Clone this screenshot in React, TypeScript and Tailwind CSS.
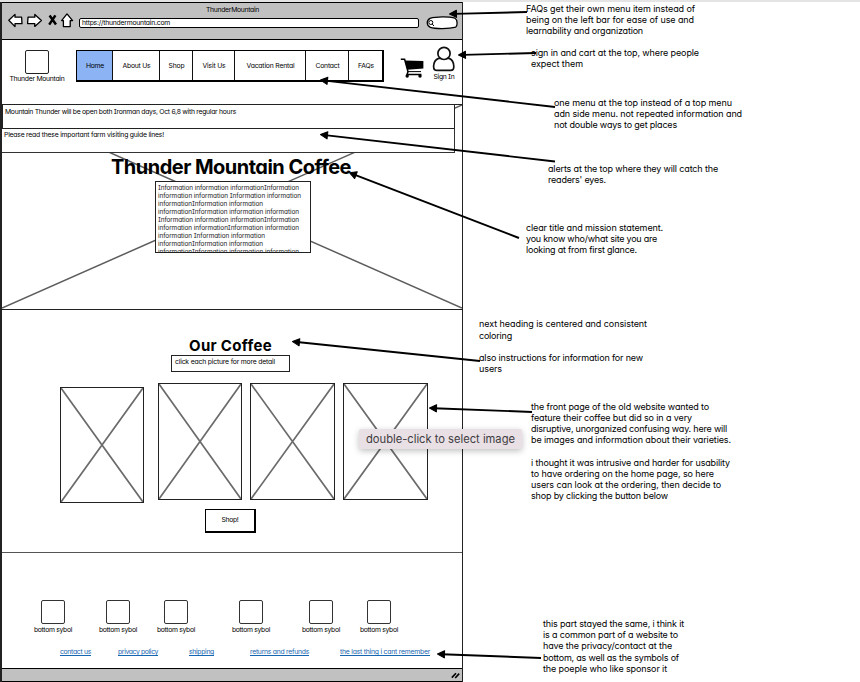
import { useLayoutEffect, useRef, useState } from "react";

/** A single line of text, tracked so that it fills the given width. */
function Fit({
  w,
  children,
  className = "",
  textClass = "",
}: {
  w: number;
  children: string;
  className?: string;
  textClass?: string;
}) {
  const ref = useRef<HTMLSpanElement>(null);
  const [spacing, setSpacing] = useState(0);
  useLayoutEffect(() => {
    const el = ref.current;
    if (!el) return;
    el.style.letterSpacing = "0px";
    const natural = el.getBoundingClientRect().width;
    const next = (w - natural) / children.length;
    el.style.letterSpacing = `${next}px`;
    setSpacing(next);
  }, [w, children]);
  return (
    <div className={`whitespace-nowrap ${className}`}>
      <span ref={ref} className={`inline-block ${textClass}`} style={{ letterSpacing: `${spacing}px` }}>
        {children}
      </span>
    </div>
  );
}

type Line = [string, number];

const menu: { label: string; text: number; cell: string }[] = [
  { label: "Home", text: 18, cell: "w-[36px] bg-[#8cb4f5] border-r" },
  { label: "About Us", text: 28, cell: "w-[47px] border-r" },
  { label: "Shop", text: 16, cell: "w-[33px] border-r" },
  { label: "Visit Us", text: 23, cell: "w-[42px] border-r" },
  { label: "Vacation Rental", text: 48, cell: "w-[71px] border-r" },
  { label: "Contact", text: 24, cell: "w-[43px] border-r" },
  { label: "FAQs", text: 16, cell: "w-[33px]" },
];

const mission: Line[] = [
  ["Information information informationInformation", 141],
  ["information information Information information", 143],
  ["informationInformation information", 105],
  ["informationInformation information information", 141],
  ["Information information informationInformation", 141],
  ["information informationInformation information", 141],
  ["information Information information", 107],
  ["informationInformation information", 105],
  ["informationInformation information information", 141],
];

const notes: { box: string; lines: Line[] }[] = [
  {
    box: "mt-[1px] ml-[63px]",
    lines: [
      ["FAQs get their own menu item instead of", 169],
      ["being on the left bar for ease of use and", 168],
      ["learnability and organization", 117],
    ],
  },
  {
    box: "mt-[10px] ml-[68px]",
    lines: [
      ["sign in and cart at the top, where people", 168],
      ["expect them", 52],
    ],
  },
  {
    box: "mt-[28px] ml-[91px]",
    lines: [
      ["one menu at the top instead of a top menu", 178],
      ["adn side menu. not repeated information and", 188],
      ["not double ways to get places", 123],
    ],
  },
  {
    box: "mt-[32px] ml-[85px]",
    lines: [
      ["alerts at the top where they will catch the", 170],
      ["readers' eyes.", 58],
    ],
  },
  {
    box: "mt-[37px] ml-[63px]",
    lines: [
      ["clear title and mission statement.", 137],
      ["you know who/what site you are", 131],
      ["looking at from first glance.", 111],
    ],
  },
  {
    box: "mt-[63px] ml-[16px]",
    lines: [
      ["next heading is centered and consistent", 168],
      ["coloring", 33],
      ["", 0],
      ["also instructions for information for new", 164],
      ["users", 23],
    ],
  },
  {
    box: "mt-[26.5px] ml-[68px]",
    lines: [
      ["the front page of the old website wanted to", 178],
      ["feature their coffee but did so in a very", 161],
      ["disruptive, unorganized confusing way. here will", 196],
      ["be images and information about their varieties.", 200],
      ["", 0],
      ["i thought it was intrusive and harder for usability", 199],
      ["to have ordering on the home page, so here", 183],
      ["users can look at the ordering, then decide to", 190],
      ["shop by clicking the button below", 137],
    ],
  },
  {
    box: "mt-[116.5px] ml-[80px]",
    lines: [
      ["this part stayed the same, i think it", 141],
      ["is a common part of a website to", 135],
      ["have the privacy/contact at the", 129],
      ["bottom, as well as the symbols of", 136],
      ["the poeple who like sponsor it", 124],
    ],
  },
];

const arrows = [
  [449, 14, 527, 12],
  [458, 55, 536, 53],
  [320, 80, 555, 107],
  [320, 134.5, 555, 161.5],
  [349, 172.5, 519, 238],
  [292, 341.5, 480, 361],
  [429, 408, 532, 412],
  [437, 654, 541, 658],
];

function Arrows() {
  return (
    <svg className="pointer-events-none absolute inset-0" width="860" height="682">
      {arrows.map(([x, y, tx, ty]) => {
        const angle = (Math.atan2(ty - y, tx - x) * 180) / Math.PI;
        const length = Math.hypot(tx - x, ty - y);
        return (
          <g key={`${x}-${y}`} transform={`translate(${x} ${y}) rotate(${angle})`}>
            <path d={`M5 0H${length}`} stroke="#000" strokeWidth="1.9" />
            <path d="M0.5 0L7.5 -3.6V3.6Z" stroke="#000" strokeLinejoin="round" />
          </g>
        );
      })}
    </svg>
  );
}

function Picture({ className }: { className: string }) {
  return (
    <div className={`shrink-0 border-[1.5px] border-[#222] ${className}`}>
      <svg className="block h-full w-full" viewBox="0 0 100 100" preserveAspectRatio="none">
        <path
          d="M0 0L100 100M100 0L0 100"
          stroke="#6b6b6b"
          strokeWidth="1.7"
          vectorEffect="non-scaling-stroke"
        />
      </svg>
    </div>
  );
}

function BrowserBar() {
  return (
    <div className="flex h-[38px] shrink-0 flex-col border-t-[1.5px] border-b-[1.5px] border-black bg-[#c1c1c1]">
      <div className="flex h-[11px] justify-center pt-[2px] pl-px">
        <Fit w={53} className="leading-[9px]">ThunderMountain</Fit>
      </div>
      <div className="flex h-[17px] items-center pl-[6px]">
        <svg className="-mt-[3px]" width="66" height="16" viewBox="0 0 66 16" fill="#fff" stroke="#000" strokeWidth="1.3" strokeLinejoin="round">
          <path d="M.8 7.2L7 1.4V4.2H13.6L14 10.6H7V13.6Z" />
          <path d="M33.4 7.4L26.8 1.4V4.2H20L19.6 10.6H26.8V13.4Z" />
          <path d="M41.6 2.6L48 11.4M47.4 2.4L41.2 11.6" strokeWidth="2.5" />
          <path d="M59 .9L53.6 7.6H55.4V13.6H62.2V7.6H64.6Z" />
        </svg>
        <div className="mt-px ml-[5px] flex h-[10px] w-[340px] items-center rounded-[2px] border-[1.4px] border-black bg-white pl-[2px]">
          <Fit w={88} className="leading-[8px]">https://thundermountain.com</Fit>
        </div>
        <svg className="mt-px ml-[7px]" width="33" height="14" viewBox="0 0 33 14" fill="#fff" stroke="#000">
          <path d="M4 2.4C10 .5 23 .5 29 2.2C31.8 4 31.6 10 29.6 11.2C23 13 9 13 4.4 11.4C.4 9.4 .2 4.6 4 2.4Z" strokeWidth="1.3" />
          <circle cx="4.8" cy="6.5" r="2" />
          <path d="M6.2 8L8 10" />
        </svg>
      </div>
    </div>
  );
}

function SiteHeader() {
  return (
    <div className="flex h-[64px] shrink-0">
      <div className="flex w-[70px] shrink-0 flex-col items-center pt-[10px]">
        <div className="h-[24px] w-[24px] shrink-0 rounded-[2px] border-[1.4px] border-[#222]" />
        <Fit w={55} className="leading-[9px]">Thunder Mountain</Fit>
      </div>
      <nav className="mt-[10px] ml-[4px] flex h-[32px] w-[308px] shrink-0 border border-r-[2px] border-b-[2px] border-black">
        {menu.map((m) => (
          <div key={m.label} className={`flex shrink-0 items-center justify-center border-[#111] pt-px pl-px ${m.cell}`}>
            <Fit w={m.text}>{m.label}</Fit>
          </div>
        ))}
      </nav>
      <svg className="mt-[17px] ml-[16px] shrink-0" width="25" height="22" viewBox="0 0 25 22">
        <path d="M.8 2.2H4.6L8 14.8L7 17.6H21.4" fill="none" stroke="#000" strokeWidth="1.5" />
        <path d="M4.8 3.4L23.4 4V11.4L7.4 12.8Z" />
        <path d="M7.4 14.6H21" stroke="#000" />
        <circle cx="7.2" cy="19" r="1.7" />
        <circle cx="20" cy="19" r="1.7" />
      </svg>
      <div className="ml-[5px] flex w-[28px] shrink-0 flex-col items-center pt-[6px]">
        <svg className="shrink-0" width="24" height="26" viewBox="0 0 24 26" fill="#fff" stroke="#111" strokeWidth="1.7">
          <path d="M6.6 12.4C3.4 13.4 1.8 16.4 1.6 20.4C1.6 23.4 3 24.4 5 24.4H18.4C21 24.4 22 23 21.8 20.2C21.6 16.6 20 13.4 17.2 12.4Z" />
          <circle cx="12" cy="7.4" r="6.1" />
        </svg>
        <Fit w={21} className="leading-[9px]">Sign In</Fit>
      </div>
    </div>
  );
}

function Hero() {
  return (
    <div className="relative h-[206px] shrink-0 border-t border-b-[1.5px] border-[#222]">
      <svg className="absolute inset-0 h-full w-full" viewBox="0 0 461 204" preserveAspectRatio="none">
        <path d="M0 0L461 203M461 0L0 203" stroke="#5c5c5c" strokeWidth="1.5" />
      </svg>
      <div className="relative flex flex-col">
        <div className="h-[24px] w-[453px] border-r-[1.5px] border-b border-l border-[#222] bg-white pt-[2px] pl-[2px]">
          <Fit w={231} className="leading-[10px]">Mountain Thunder will be open both Ironman days, Oct 6,8 with regular hours</Fit>
        </div>
        <div className="h-[24px] w-[453px] border-r-[1.5px] border-b border-[#333] bg-white pt-px pl-[2px]">
          <Fit w={160} className="leading-[10px]">Please read these important farm visiting guide lines!</Fit>
        </div>
        <h1 className="mt-px ml-[109px] text-[20px] font-bold">
          <Fit w={240} className="leading-[26px]">Thunder Mountain Coffee</Fit>
        </h1>
        <div className="mt-px ml-[153px] h-[72px] w-[156px] overflow-hidden border-[1.5px] border-[#222] bg-white pt-[2px] pl-[2px] text-[6.4px]">
          {mission.map(([text, w], i) => (
            <Fit key={i} w={w} className="h-[8.05px] leading-[8.05px] text-[#222]">{text}</Fit>
          ))}
        </div>
      </div>
    </div>
  );
}

function Coffee() {
  return (
    <div className="flex h-[243px] shrink-0 flex-col border-b-[1.5px] border-[#555]">
      <h2 className="mt-[26px] ml-[187px] text-[15px] font-bold">
        <Fit w={83} className="leading-[19px]">Our Coffee</Fit>
      </h2>
      <div className="ml-[169px] h-[17px] w-[119px] border-[1.5px] border-[#222] pl-[3px]">
        <Fit w={100} className="leading-[11px]">click each picture for more detail</Fit>
      </div>
      <div className="mt-[11px] flex pl-[58px]">
        <Picture className="mt-[4px] h-[116px] w-[84px]" />
        <Picture className="ml-[14px] h-[117px] w-[84px]" />
        <Picture className="ml-[8px] h-[117px] w-[85px]" />
        <Picture className="ml-[8px] h-[117px] w-[85px]" />
      </div>
      <button className="mt-[6px] ml-[203px] flex h-[24px] w-[51px] shrink-0 items-center justify-center border border-r-[2px] border-b-[2px] border-black">
        <Fit w={17}>Shop!</Fit>
      </button>
    </div>
  );
}

const symbols = ["ml-[31px]", "ml-[25px]", "ml-[18px]", "ml-[35px]", "ml-[30px]", "ml-[18px]"];

const links: { label: string; w: number; gap: string }[] = [
  { label: "contact us", w: 31, gap: "ml-[58px]" },
  { label: "privacy policy", w: 40, gap: "ml-[27px]" },
  { label: "shipping", w: 25, gap: "ml-[31px]" },
  { label: "returns and refunds", w: 59, gap: "ml-[36px]" },
  { label: "the last thing i cant remember", w: 90, gap: "ml-[31px]" },
];

function Footer() {
  return (
    <div className="flex h-[115px] shrink-0 flex-col pt-[47px]">
      <div className="flex">
        {symbols.map((gap, i) => (
          <div key={i} className={`flex w-[40px] shrink-0 flex-col items-center ${gap}`}>
            <div className="h-[24px] w-[24px] rounded-[2px] border-[1.4px] border-[#333]" />
            <Fit w={38} className="mt-px leading-[9px]">bottom sybol</Fit>
          </div>
        ))}
      </div>
      <div className="mt-[13px] flex">
        {links.map((l) => (
          <div key={l.label} className={`shrink-0 text-[#1565b0] ${l.gap}`}>
            <Fit w={l.w} className="leading-[10px]" textClass="underline decoration-[0.5px] underline-offset-1">{l.label}</Fit>
          </div>
        ))}
      </div>
    </div>
  );
}

export default function App() {
  return (
    <div className="relative flex h-[682px] w-[860px] overflow-hidden border-t-2 border-[#e4e4e4] bg-white font-['Inter','Noto_Sans',sans-serif] text-[6.8px] leading-none text-black [font-feature-settings:'cv11','cv08']">
      <div className="flex h-[680px] w-[463px] shrink-0 flex-col border-r border-l-2 border-[#222]">
        <BrowserBar />
        <SiteHeader />
        <Hero />
        <Coffee />
        <Footer />
        <div className="flex h-[14px] shrink-0 items-center justify-end border-t-[1.5px] border-b border-black bg-[#c1c1c1] pr-[2px]">
          <svg width="9" height="7" viewBox="0 0 9 7" stroke="#000" strokeWidth="1.6">
            <path d="M.8 5.6L5 1.2M4.2 6L8.2 1.6" />
          </svg>
        </div>
      </div>
      <div className="flex flex-col text-[9px]">
        {notes.map((note, i) => (
          <div key={i} className={note.box}>
            {note.lines.map(([text, w], j) => (
              <Fit key={j} w={w} className="h-[11.2px] leading-[11.2px]">{text}</Fit>
            ))}
          </div>
        ))}
      </div>
      <div className="absolute top-[427px] left-[359px] flex h-[20px] w-[163px] items-center justify-center rounded-[2px] bg-[#e8e0e5] pt-px text-[11.2px] text-[#3f3c3f] shadow-[0_2px_6px_rgba(0,0,0,0.25)] [font-feature-settings:normal]">
        <Fit w={149}>double-click to select image</Fit>
      </div>
      <div className="absolute -top-[2px] left-0">
        <Arrows />
      </div>
    </div>
  );
}
